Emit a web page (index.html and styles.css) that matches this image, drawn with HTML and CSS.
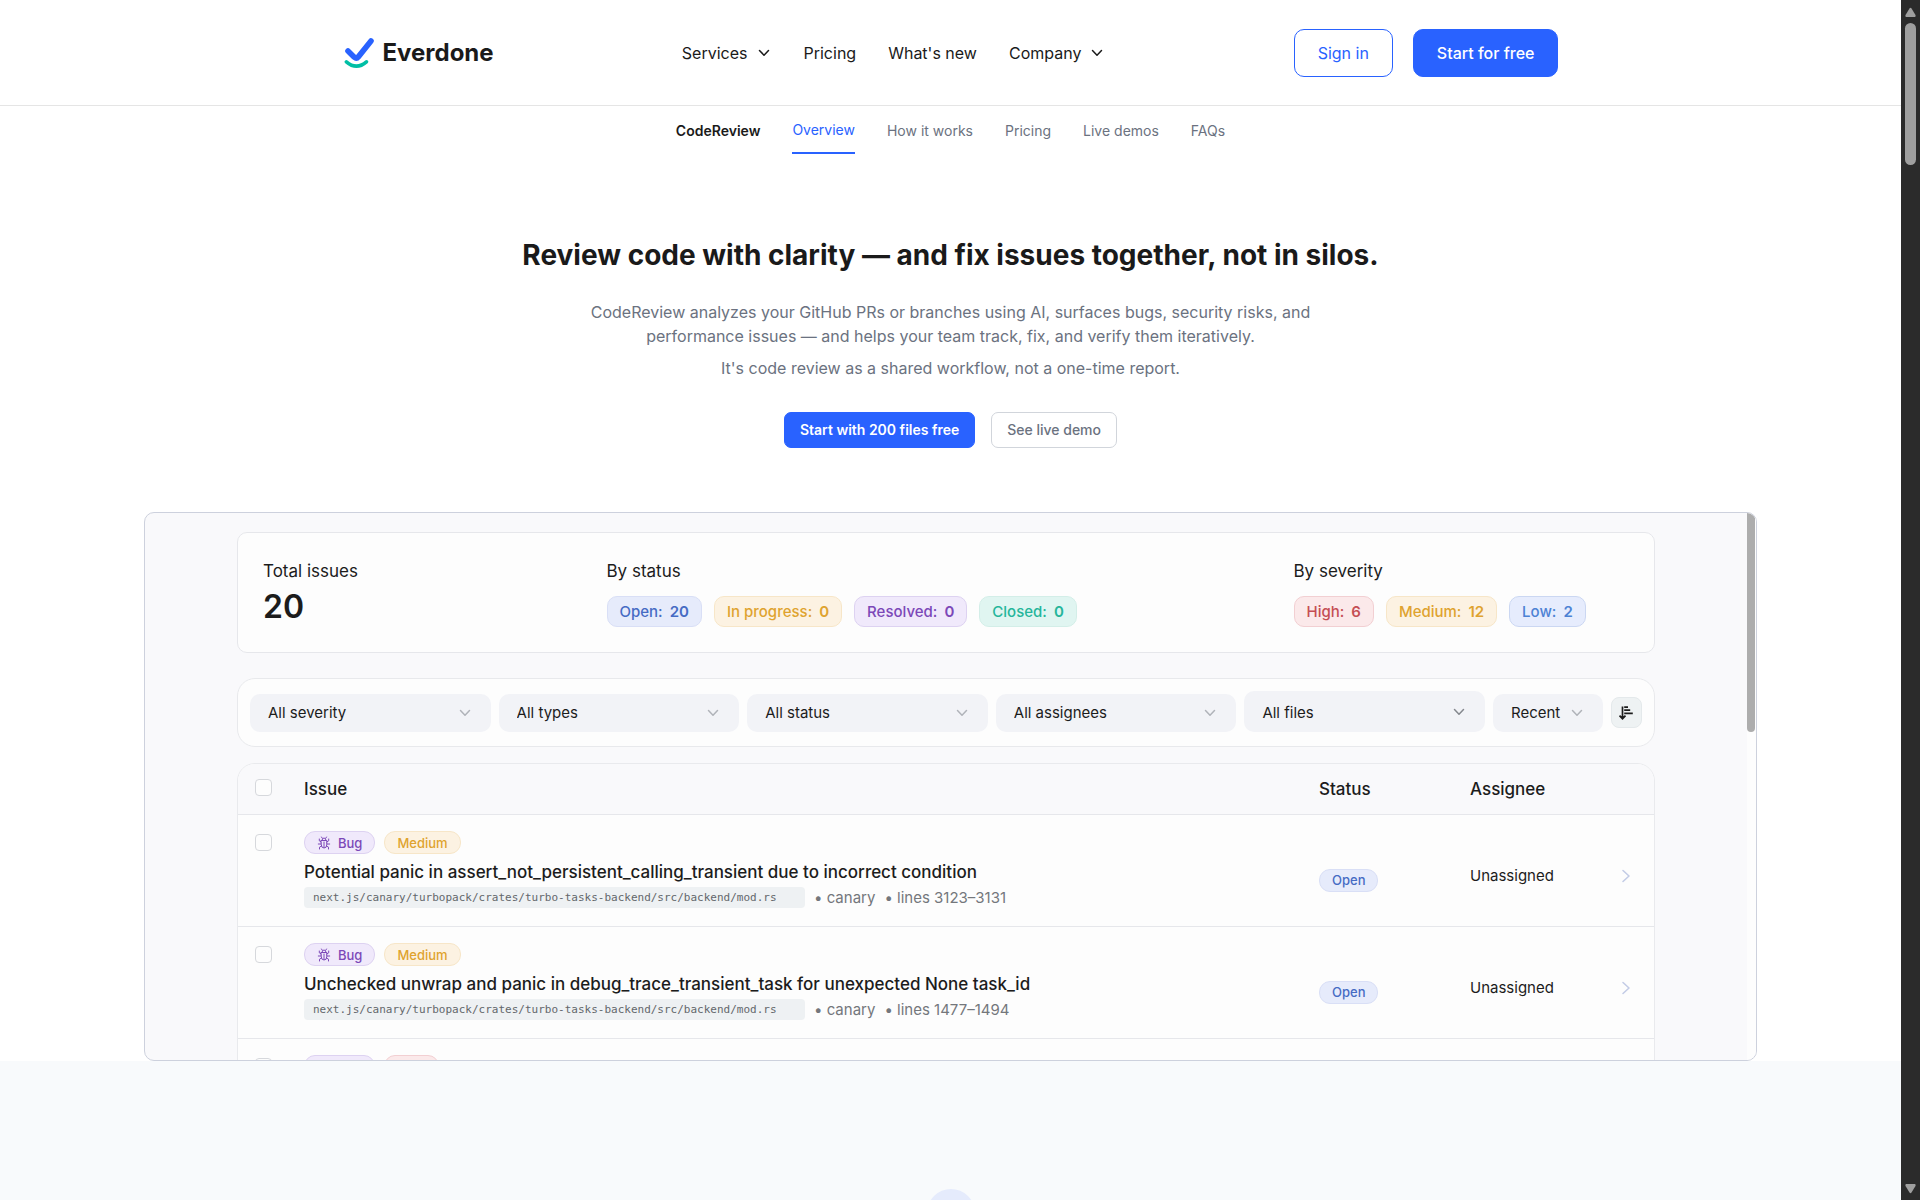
FILE: index.html
```html
<!DOCTYPE html>
<html lang="en">
<head>
<meta charset="utf-8">
<meta name="viewport" content="width=device-width, initial-scale=1">
<title>Everdone CodeReview</title>
<link rel="stylesheet" href="styles.css">
</head>
<body>
<svg class="defs" aria-hidden="true">
  <symbol id="chevron" viewBox="0 0 16 16"><path d="M3.500 5.500 8 10.200 12.500 5.500" fill="none" stroke="currentColor" stroke-width="1.500" stroke-linecap="round" stroke-linejoin="round"/></symbol>
  <symbol id="chevron-right" viewBox="0 0 16 16"><path d="M5 2.500 11 8 5 13.500" fill="none" stroke="currentColor" stroke-width="1.600" stroke-linecap="round" stroke-linejoin="round"/></symbol>
  <symbol id="bug" viewBox="0 0 14 14"><g fill="none" stroke="currentColor" stroke-width="1" stroke-linecap="round" stroke-linejoin="round"><path d="M4.200 4.500h5.600v4.200a2.800 3.300 0 0 1-5.600 0zM5 4.500a2 2.500 0 0 1 4 0M7 6v5.500M4.200 6 2.300 4.800V3M9.800 6l1.900-1.200V3M4.200 8H1.300M9.800 8h2.900M4.500 10l-2 1.200V13M9.500 10l2 1.200V13M5.300 2.300 4.500 1M8.700 2.300 9.500 1"/></g></symbol>
</svg>
<div class="page">
  <header class="header">
    <div class="header-inner">
      <a class="logo" href="#">
        <svg width="32" height="32" viewBox="0 0 32 32" aria-hidden="true"><path d="M5 14 11.300 20.200Q13.500 22 15.500 19.600L28 4" fill="none" stroke="#2962ff" stroke-width="5.600" stroke-linecap="round" stroke-linejoin="round"/><path d="M3.400 24.800Q13.500 33.500 23.400 24.800" fill="none" stroke="#00bfa5" stroke-width="3.600" stroke-linecap="round"/></svg>
        <span>Everdone</span>
      </a>
      <nav class="main-nav">
        <a href="#">Services <svg width="16" height="16" aria-hidden="true"><use href="#chevron"/></svg></a>
        <a href="#">Pricing</a>
        <a href="#">What's new</a>
        <a href="#">Company <svg width="16" height="16" aria-hidden="true"><use href="#chevron"/></svg></a>
      </nav>
      <div class="header-actions">
        <button class="btn btn-outline" type="button">Sign in</button>
        <button class="btn btn-solid" type="button">Start for free</button>
      </div>
    </div>
  </header>

  <nav class="sub-nav">
    <a class="product" href="#">CodeReview</a>
    <a class="current" href="#">Overview</a>
    <a href="#">How it works</a>
    <a href="#">Pricing</a>
    <a href="#">Live demos</a>
    <a href="#">FAQs</a>
  </nav>

  <main>
    <section class="hero">
      <h1>Review code with clarity — and fix issues together, not in silos.</h1>
      <p>CodeReview analyzes your GitHub PRs or branches using AI, surfaces bugs, security risks, and performance issues — and helps your team track, fix, and verify them iteratively.</p>
      <p>It's code review as a shared workflow, not a one-time report.</p>
      <div class="hero-actions">
        <button class="btn-small primary" type="button">Start with 200 files free</button>
        <button class="btn-small" type="button">See live demo</button>
      </div>
    </section>

    <section class="demo">
      <div class="demo-body">
        <div class="summary">
          <div>
            <h2>Total issues</h2>
            <div class="total">20</div>
          </div>
          <div>
            <h2>By status</h2>
            <div class="pills">
              <span class="pill blue">Open: <b>20</b></span>
              <span class="pill amber">In progress: <b>0</b></span>
              <span class="pill purple">Resolved: <b>0</b></span>
              <span class="pill teal">Closed: <b>0</b></span>
            </div>
          </div>
          <div>
            <h2>By severity</h2>
            <div class="pills">
              <span class="pill red">High: <b>6</b></span>
              <span class="pill amber">Medium: <b>12</b></span>
              <span class="pill sky">Low: <b>2</b></span>
            </div>
          </div>
        </div>

        <div class="filters">
          <div class="filter"><select aria-label="Severity"><option>All severity</option></select><svg width="16" height="16" aria-hidden="true"><use href="#chevron"/></svg></div>
          <div class="filter"><select aria-label="Type"><option>All types</option></select><svg width="16" height="16" aria-hidden="true"><use href="#chevron"/></svg></div>
          <div class="filter"><select aria-label="Status"><option>All status</option></select><svg width="16" height="16" aria-hidden="true"><use href="#chevron"/></svg></div>
          <div class="filter"><select aria-label="Assignee"><option>All assignees</option></select><svg width="16" height="16" aria-hidden="true"><use href="#chevron"/></svg></div>
          <div class="filter active"><select aria-label="Files"><option>All files</option></select><svg width="16" height="16" aria-hidden="true"><use href="#chevron"/></svg></div>
          <div class="filter sort"><select aria-label="Sort by"><option>Recent</option></select><svg width="16" height="16" aria-hidden="true"><use href="#chevron"/></svg></div>
          <button class="sort-dir" type="button" aria-label="Sort direction"><svg width="16" height="16" viewBox="0 0 16 16" aria-hidden="true"><path d="M4.500 1.500v12M1.500 10.700l3 3 3-3M6.200 2.200H10M6.200 5.200h6M6.200 8.300h8.600" fill="none" stroke="currentColor" stroke-width="1.700"/></svg></button>
        </div>

        <div class="issues">
          <table>
            <colgroup><col class="c-check"><col><col class="c-status"><col class="c-assignee"><col class="c-go"></colgroup>
            <thead>
              <tr><th><input type="checkbox" aria-label="Select all issues"></th><th>Issue</th><th>Status</th><th>Assignee</th><th></th></tr>
            </thead>
            <tbody>
              <tr>
                <td><input type="checkbox" aria-label="Select issue"></td>
                <td>
                  <div class="tags"><span class="tag purple"><svg width="14" height="14" aria-hidden="true"><use href="#bug"/></svg>Bug</span><span class="tag amber">Medium</span></div>
                  <div class="title">Potential panic in assert_not_persistent_calling_transient due to incorrect condition</div>
                  <div class="meta"><code>next.js/canary/turbopack/crates/turbo-tasks-backend/src/backend/mod.rs</code><span>• canary</span><span>• lines 3123–3131</span></div>
                </td>
                <td class="status"><span class="tag blue">Open</span></td>
                <td class="assignee">Unassigned</td>
                <td class="go"><svg width="16" height="16" aria-hidden="true"><use href="#chevron-right"/></svg></td>
              </tr>
              <tr>
                <td><input type="checkbox" aria-label="Select issue"></td>
                <td>
                  <div class="tags"><span class="tag purple"><svg width="14" height="14" aria-hidden="true"><use href="#bug"/></svg>Bug</span><span class="tag amber">Medium</span></div>
                  <div class="title">Unchecked unwrap and panic in debug_trace_transient_task for unexpected None task_id</div>
                  <div class="meta"><code>next.js/canary/turbopack/crates/turbo-tasks-backend/src/backend/mod.rs</code><span>• canary</span><span>• lines 1477–1494</span></div>
                </td>
                <td class="status"><span class="tag blue">Open</span></td>
                <td class="assignee">Unassigned</td>
                <td class="go"><svg width="16" height="16" aria-hidden="true"><use href="#chevron-right"/></svg></td>
              </tr>
              <tr>
                <td><input type="checkbox" aria-label="Select issue"></td>
                <td><div class="tags"><span class="tag purple"><svg width="14" height="14" aria-hidden="true"><use href="#bug"/></svg>Bug</span><span class="tag red">High</span></div></td>
                <td></td><td></td><td></td>
              </tr>
            </tbody>
          </table>
        </div>
      </div>
      <div class="demo-scroll"><div class="demo-thumb"></div></div>
    </section>

    <section class="next">
      <div class="badge"></div>
    </section>
  </main>
</div>
<div class="scrollbar" aria-hidden="true">
  <svg width="11" height="10" viewBox="0 0 11 10"><path d="M4.500 1.500Q5.500 0 6.500 1.500L10.500 8Q11 9.500 10 10H1Q0 9.500.5 8z" fill="#9f9f9f"/></svg>
  <div class="thumb"></div>
  <svg width="11" height="10" viewBox="0 0 11 10"><path d="M4.500 8.500Q5.500 10 6.500 8.500L10.500 2Q11 .5 10 0H1Q0 .5.5 2z" fill="#9f9f9f"/></svg>
</div>
</body>
</html>
```
FILE: styles.css
```css
* { box-sizing: border-box; }

body {
  margin: 0;
  display: flex;
  height: 100vh;
  overflow: hidden;
  background: #fff;
  color: #1a1a1a;
  font-family: Inter, "Liberation Sans", sans-serif;
  font-size: 16px;
  line-height: 24px;
}

a { color: inherit; text-decoration: none; }
button, select { font: inherit; color: inherit; cursor: pointer; }
h1, h2, p { margin: 0; }
.defs { position: absolute; width: 0; height: 0; }

.page { flex: 1; min-width: 0; overflow: hidden; }

/* window scrollbar */
.scrollbar {
  flex: none;
  display: flex;
  flex-direction: column;
  align-items: center;
  width: 19px;
  padding: 7px 0 6px;
  background: #2b2b2b;
}
.thumb { width: 11px; height: 142px; margin: 6px 0 auto; border-radius: 6px; background: #9f9f9f; }

/* header */
.header { border-bottom: 1px solid #e5e5e5; }
.header-inner {
  display: flex;
  align-items: center;
  justify-content: space-between;
  max-width: 1280px;
  height: 105px;
  margin: 0 auto;
  padding: 0 32px;
}
.logo { display: flex; align-items: center; gap: 8px; font-size: 24px; font-weight: 700; }
.main-nav { display: flex; gap: 32px; }
.main-nav a { display: flex; align-items: center; gap: 8px; }
.header-actions { display: flex; gap: 20px; }
.btn { height: 48px; padding: 0 23px; border: 1px solid #2962ff; border-radius: 10px; }
.btn-outline { background: #fff; color: #2962ff; }
.btn-solid { background: #2962ff; color: #fff; font-weight: 500; }

.sub-nav {
  display: flex;
  align-items: center;
  justify-content: center;
  gap: 32px;
  height: 50px;
  color: #6b7280;
  font-size: 14px;
  line-height: 20px;
}
.sub-nav .product { color: #1a1a1a; font-weight: 600; }
.sub-nav .current { padding: 12px 0; border-bottom: 2px solid #2962ff; color: #2962ff; }

/* hero */
.hero { padding: 80px 32px 64px; text-align: center; color: #6b7280; }
.hero h1 { margin-bottom: 25px; color: #1a1a1a; font-size: 28px; line-height: 39px; font-weight: 700; }
.hero p { max-width: 768px; margin: 0 auto 8px; }
.hero-actions { display: flex; justify-content: center; gap: 16px; margin-top: 32px; }
.btn-small {
  height: 36px;
  padding: 0 15px;
  border: 1px solid #d1d5db;
  border-radius: 7px;
  background: #fff;
  color: #6b7280;
  font-size: 14px;
  font-weight: 500;
}
.btn-small.primary { border-color: #2962ff; background: #2962ff; color: #fff; font-weight: 600; }

/* product demo */
.demo {
  display: flex;
  max-width: 1613px;
  aspect-ratio: 1613 / 549;
  margin: 0 auto;
  overflow: hidden;
  border: 1px solid #cdd1dd;
  border-radius: 10px;
  background: #f9f9fb;
}
.demo-body { flex: 1; min-width: 0; padding: 19px 92px 0; color: #1c1c1c; }
.demo-scroll { width: 9px; background: #fdfdfd; }
.demo-thumb { width: 8px; height: 40%; border-radius: 0 0 4px 4px; background: #adadad; }

.summary {
  display: grid;
  grid-template-columns: 1fr 2fr 1fr;
  height: 121px;
  padding: 26px 17px 0 25px;
  border: 1px solid #e6e7eb;
  border-radius: 10px;
  background: #fdfdfd;
}
.summary h2 { margin-bottom: 13px; font-size: 17px; line-height: 24px; font-weight: 400; }
.total { font-size: 32px; line-height: 22px; font-weight: 600; }
.pills { display: flex; gap: 12px; }
.pill {
  height: 31px;
  padding: 0 12px;
  border: 1px solid;
  border-radius: 10px;
  font-size: 15px;
  line-height: 29px;
  font-weight: 500;
  white-space: nowrap;
}
.pill b { margin-left: 3px; font-weight: 600; }

.filters {
  display: flex;
  align-items: flex-end;
  gap: 8px;
  height: 69px;
  margin-top: 25px;
  padding: 0 12px 14px;
  border: 1px solid #e8e9ec;
  border-radius: 18px;
  background: #fdfdfd;
}
.filter { display: grid; flex: 1; align-items: center; color: #b0b3b9; }
.filter > * { grid-area: 1 / 1; }
.filter svg { justify-self: end; margin-right: 18px; pointer-events: none; }
.filter select {
  appearance: none;
  width: 100%;
  height: 38px;
  padding: 0 18px;
  border: 0;
  border-radius: 10px;
  background: #f2f3f7;
  color: #1c1c1c;
  font-size: 15px;
}
.filter.active { color: #85888e; }
.filter.active select { height: 41px; padding-top: 3px; }
.filter.sort { flex: 0 0 110px; }
.sort-dir {
  display: grid;
  place-items: center;
  width: 31px;
  height: 31px;
  margin-bottom: 4px;
  padding: 0;
  border: 1px solid #e4e9eb;
  border-radius: 8px;
  background: #eef2f3;
}

.issues {
  margin-top: 16px;
  overflow: hidden;
  border: 1px solid #e9eaed;
  border-radius: 18px 18px 0 0;
  background: #fdfdfd;
}
table { width: 100%; table-layout: fixed; border-collapse: separate; border-spacing: 0; }
.c-check { width: 66px; }
.c-status { width: 151px; }
.c-assignee { width: 148px; }
.c-go { width: 36px; }
th, td { border-bottom: 1px solid #e6e7eb; }
th { height: 51px; padding: 0; background: #f9f9fb; font-size: 17px; font-weight: 500; text-align: left; }
td { height: 112px; padding: 16px 0 0; vertical-align: top; }
input[type="checkbox"] {
  appearance: none;
  display: block;
  width: 17px;
  height: 17px;
  margin: 3px 0 0 17px;
  border: 1px solid #d6d8dc;
  border-radius: 4px;
  background: #fdfdfd;
}
th input[type="checkbox"] { margin: 0 0 4px 17px; }
.tags { display: flex; gap: 9px; }
.tag {
  display: inline-flex;
  align-items: center;
  gap: 7px;
  height: 23px;
  padding: 0 12px;
  border: 1px solid;
  border-radius: 11px;
  font-size: 13px;
  font-weight: 500;
  line-height: 20px;
}
.title { margin-top: 6px; font-size: 17px; line-height: 24px; font-weight: 500; white-space: nowrap; }
.meta { display: flex; align-items: center; gap: 9px; margin-top: 3px; color: #74777c; font-size: 15px; line-height: 21px; white-space: nowrap; }
.meta code {
  min-width: 501px;
  padding: 0 9px;
  border-radius: 4px;
  background: #eef1f3;
  color: #63676b;
  font-family: "DejaVu Sans Mono", monospace;
  font-size: 11px;
}
td.status { padding-top: 52px; }
td.assignee { padding-top: 49px; font-size: 15px; }
td.go { padding-top: 53px; color: #c3cce6; }
.go svg { display: block; }

/* label colours */
.blue { border-color: #d9dff6; background: #e6ebfb; color: #466bc4; }
.sky { border-color: #cbd7f2; background: #e6ecfd; color: #4d82d4; }
.amber { border-color: #f7e6c8; background: #fcf2e2; color: #dfa32f; }
.purple { border-color: #ddd2f1; background: #f0e9fb; color: #7c48b8; }
.teal { border-color: #d3eee8; background: #e0f5f1; color: #26b59b; }
.red { border-color: #f2cfd2; background: #fbe9ea; color: #c54e54; }

/* following section */
.next { min-height: 400px; padding-top: 128px; background: #f8fafc; }
.badge { width: 48px; height: 48px; margin: 0 auto; border-radius: 50%; background: #e5ebfc; }
```
